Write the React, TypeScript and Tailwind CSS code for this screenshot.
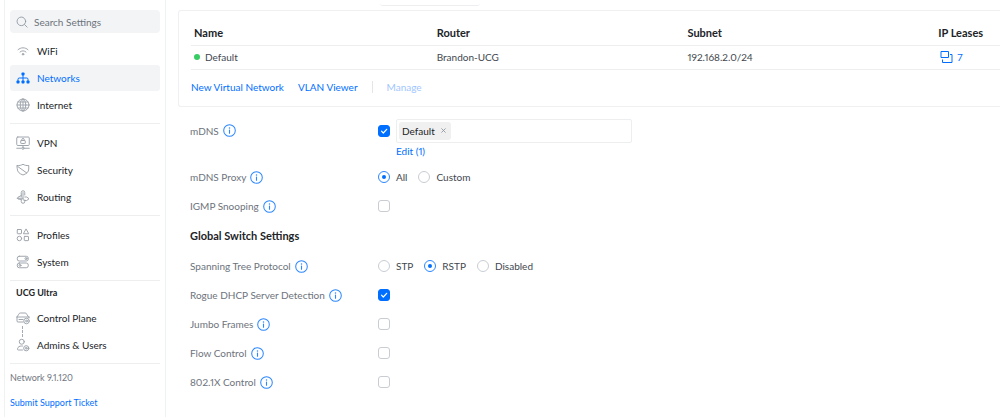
import type { ReactNode } from "react";

function Icon({ children, className = "size-[14px]" }: { children: ReactNode; className?: string }) {
  return (
    <svg
      viewBox="0 0 28 28"
      className={`shrink-0 ${className}`}
      fill="none"
      stroke="currentColor"
      strokeWidth="2"
      strokeLinecap="round"
      strokeLinejoin="round"
      aria-hidden="true"
    >
      {children}
    </svg>
  );
}

const icons = {
  search: (
    <>
      <circle cx="12.5" cy="12.5" r="10" />
      <path d="M20 20l6 6" />
    </>
  ),
  wifi: (
    <>
      <path d="M4 11.5c5.5-5.3 14.5-5.3 20 0" />
      <path d="M8 16c3.5-3.2 8.5-3.2 12 0" />
      <circle cx="14" cy="20.5" r="1.6" fill="currentColor" />
    </>
  ),
  networks: (
    <>
      <path d="M14 7v13M4 20v-3.5q0-2.5 2.5-2.5h15q2.5 0 2.5 2.5V20" />
      <g fill="currentColor" stroke="none">
        <rect x="11" y="3" width="6" height="6" rx="1.5" />
        <rect x="1" y="19" width="6" height="6" rx="1.5" />
        <rect x="11" y="19" width="6" height="6" rx="1.5" />
        <rect x="21" y="19" width="6" height="6" rx="1.5" />
      </g>
    </>
  ),
  internet: (
    <>
      <circle cx="14" cy="14" r="12" />
      <ellipse cx="14" cy="14" rx="5.5" ry="12" />
      <path d="M14 2v24M2 14h24M4 8h20M4 20h20" />
    </>
  ),
  vpn: (
    <>
      <rect x="1.5" y="2" width="25" height="17" rx="2" />
      <rect x="9.5" y="9" width="9" height="6" rx="1" />
      <path d="M11.5 9V7.5a2.5 2.5 0 0 1 5 0V9M14 19v3M1.5 24.5h9M17.5 24.5h9" />
      <circle cx="14" cy="24.5" r="2.2" />
    </>
  ),
  security: (
    <>
      <path d="M2.5 5c4.5.5 8.500-.5 11.5-2.500C17 4.500 21 5.500 25.500 5v7c0 6-4.500 9.500-11.500 12C7 21.500 2.500 18 2.500 12z" />
      <path d="M3.500 7l18 13" />
    </>
  ),
  routing: (
    <>
      <path d="M10.500 14V5q0-3.500 3.500-3.500T17.500 5v5M14 5v13.500q0 2 2 2h2" />
      <path d="M10.500 11L4 14.500q-2.500 2 0 3.500l6.500 1M2.500 16.500H14M10.500 19v4q0 3.500 3.500 3.500t3.500-3V20.500" />
      <path d="M17.500 14h4l4.500 3.500-4.500 3.500h-4" />
    </>
  ),
  profiles: (
    <>
      <rect x="2.5" y="3" width="8.5" height="8.5" rx="1" />
      <path d="M20.5 2.5l5 9h-10z" />
      <circle cx="6.8" cy="21" r="4.5" />
      <rect x="16.5" y="16.8" width="8.5" height="8.5" rx="1" />
    </>
  ),
  system: (
    <>
      <rect x="2.5" y="2.5" width="22" height="9.5" rx="4" />
      <rect x="2.5" y="16" width="22" height="9.5" rx="4" />
      <circle cx="20" cy="7.2" r="2" />
      <circle cx="8" cy="20.8" r="2" />
    </>
  ),
  control: (
    <>
      <path d="M2 12l3.500-5.500Q6.500 4 8.500 4h10q2 0 3 2.500L25 12M2 12h24M2 12v8q0 2 2 2h10M26 12v2M6 17h8" />
      <circle cx="21" cy="20" r="5.5" />
      <circle cx="21" cy="20" r="1.8" />
    </>
  ),
  admins: (
    <>
      <circle cx="11.5" cy="7.5" r="5" />
      <path d="M13 24H4.500q-2 0-1.500-2.500C4 17.500 7 16 11 16h2" />
      <circle cx="20.5" cy="20.5" r="5.2" />
      <circle cx="20.5" cy="20.5" r="1.8" />
    </>
  ),
};

type IconName = keyof typeof icons;

const navGroups: { label: string; icon: IconName }[][] = [
  [
    { label: "WiFi", icon: "wifi" },
    { label: "Networks", icon: "networks" },
    { label: "Internet", icon: "internet" },
  ],
  [
    { label: "VPN", icon: "vpn" },
    { label: "Security", icon: "security" },
    { label: "Routing", icon: "routing" },
  ],
  [
    { label: "Profiles", icon: "profiles" },
    { label: "System", icon: "system" },
  ],
];

function NavItem({ label, icon, active }: { label: string; icon: IconName; active?: boolean }) {
  return (
    <a
      href="#"
      className={`flex h-[26px] items-center gap-[7px] rounded-[3px] px-[6px] ${
        active ? "bg-[#f2f4f6] text-[#006fff]" : "text-[#212327]"
      }`}
    >
      <span className={active ? "" : "text-[#a0a6ae]"}>
        <Icon>{icons[icon]}</Icon>
      </span>
      {label}
    </a>
  );
}

function Divider() {
  return <hr className="mt-[5px] mb-[6px] border-[#eceef0]" />;
}

function Sidebar() {
  return (
    <aside className="w-[162px] shrink-0 border-x border-[#f0f1f3] px-[5px] pt-[10px]">
      <label className="mb-[5px] flex h-[23px] items-center gap-[6px] rounded-[4px] bg-[#f2f4f6] px-[6px] text-[#8d95a0]">
        <Icon className="size-3">{icons.search}</Icon>
        <input
          type="text"
          aria-label="Search Settings"
          placeholder="Search Settings"
          className="w-full min-w-0 bg-transparent outline-none placeholder:text-[#6d737b]"
        />
      </label>
      <nav>
        {navGroups.map((group) => (
          <div key={group[0].label}>
            <div className="flex flex-col gap-px">
              {group.map((item) => (
                <NavItem key={item.label} {...item} active={item.label === "Networks"} />
              ))}
            </div>
            <Divider />
          </div>
        ))}
        <h2 className="mb-[6px] px-[6px] text-[9px] leading-3 font-bold text-[#212327]">UCG Ultra</h2>
        <div className="relative flex flex-col gap-px">
          <NavItem label="Control Plane" icon="control" />
          <span className="absolute top-[21px] left-[12px] h-[11px] border-l border-dashed border-[#a5abb3]" />
          <NavItem label="Admins & Users" icon="admins" />
        </div>
      </nav>
      <Divider />
      <p className="text-[9px] leading-4 text-[#70767f]">Network 9.1.120</p>
      <a href="#" className="mt-[9px] block text-[9px] leading-4 text-[#006fff]">Submit Support Ticket</a>
    </aside>
  );
}

function NetworksCard() {
  return (
    <section className="rounded-l-[3px] border border-r-0 border-[#eff0f2] pt-[10px] pb-[11px] pl-3">
      <table className="w-full table-fixed text-left">
        <thead>
          <tr className="h-6 border-b border-[#eceef0] text-[11px] text-[#212327]">
            <th className="w-[30%] px-[3px] font-bold">Name</th>
            <th className="w-[31%] px-[3px] font-bold">Router</th>
            <th className="w-[31%] px-[3px] font-bold">Subnet</th>
            <th className="w-[8%] px-[3px] font-bold">IP Leases</th>
          </tr>
        </thead>
        <tbody>
          <tr className="h-6 border-b border-[#eceef0] text-[#42474e]">
            <td className="px-[3px]">
              <span className="flex items-center gap-[5px]">
                <span className="size-[6px] rounded-full bg-[#38cc65]" />
                Default
              </span>
            </td>
            <td className="px-[3px]">Brandon-UCG</td>
            <td className="px-[3px]">192.168.2.0/24</td>
            <td className="px-[3px]">
              <a href="#" className="flex items-center gap-1 pl-px text-[#006fff]">
                <Icon>
                  <path d="M5 3h14v12H5zM23 9h3v16H7v-5" strokeLinecap="square" strokeLinejoin="miter" />
                </Icon>
                7
              </a>
            </td>
          </tr>
        </tbody>
      </table>
      <div className="mt-[9px] flex h-4 items-center gap-[14px] text-[#006fff]">
        <button type="button">New Virtual Network</button>
        <button type="button">VLAN Viewer</button>
        <span className="h-3 border-l border-[#e3e6e9]" />
        <button type="button" disabled className="text-[#9fc6ff]">Manage</button>
      </div>
    </section>
  );
}

function InfoIcon() {
  return (
    <Icon className="size-[13px] text-[#2b87ff]">
      <circle cx="14" cy="14" r="12.5" strokeWidth="2.2" />
      <path d="M14 13v7" strokeWidth="2.4" />
      <circle cx="14" cy="8.5" r="1.6" fill="currentColor" stroke="none" />
    </Icon>
  );
}

function Row({ id, label, children }: { id: string; label: string; children: ReactNode }) {
  return (
    <div className="flex h-[29px] items-center">
      <div className="flex w-[188px] shrink-0 items-center gap-1 text-[#6d737c]">
        <label htmlFor={id}>{label}</label>
        <InfoIcon />
      </div>
      {children}
    </div>
  );
}

function Checkbox({ id, checked }: { id: string; checked?: boolean }) {
  return (
    <span className="relative flex size-3 shrink-0">
      <input
        id={id}
        type="checkbox"
        defaultChecked={checked}
        className="peer size-3 appearance-none rounded-[3px] border border-[#c9cdd3] checked:border-[#006fff] checked:bg-[#006fff]"
      />
      <svg
        viewBox="0 0 12 12"
        className="pointer-events-none absolute inset-0 hidden size-3 peer-checked:block"
        fill="none"
        stroke="white"
        strokeWidth="1.2"
        strokeLinecap="round"
        strokeLinejoin="round"
      >
        <path d="M3.5 6.2l1.8 1.8L8.7 4.3" />
      </svg>
    </span>
  );
}

function RadioGroup({ id, options, value }: { id: string; options: string[]; value: string }) {
  return (
    <div className="flex items-center gap-[11px]">
      {options.map((option, i) => (
        <label key={option} className="flex items-center gap-[6px] text-[#42474e]">
          <span className="relative flex size-3 items-center justify-center">
            <input
              id={i === 0 ? id : undefined}
              type="radio"
              name={id}
              defaultChecked={option === value}
              className="peer size-3 appearance-none rounded-full border border-[#c9cdd3] checked:border-[#2b87ff]"
            />
            <span className="pointer-events-none absolute hidden size-[4px] rounded-full bg-[#006fff] peer-checked:block" />
          </span>
          {option}
        </label>
      ))}
    </div>
  );
}

export default function App() {
  return (
    <div className="flex min-h-screen overflow-x-hidden bg-white pl-1 font-['Lato','Liberation_Sans',sans-serif] text-[10px] leading-4 proportional-nums">
      <Sidebar />
      <main className="min-w-0 flex-1 pl-3">
        <div className="mb-1 ml-[202px] h-[6px] w-[100px] rounded-b-[3px] border-b border-[#eceef0]" />
        <NetworksCard />
        <form className="pt-3 pl-3">
          <div className="mb-1 flex">
            <div className="flex h-6 w-[188px] shrink-0 items-center gap-1 text-[#6d737c]">
              <label htmlFor="mdns">mDNS</label>
              <InfoIcon />
            </div>
            <div className="flex h-6 items-center">
              <Checkbox id="mdns" checked />
            </div>
            <div className="ml-[6px] w-[236px]">
              <div className="flex h-6 items-center rounded-[2px] border border-[#eceef0] px-[2px]">
                <span className="flex h-[18px] items-center gap-1 rounded-[3px] bg-[#f0f0f1] px-[3px] text-[#212327]">
                  Default
                  <button type="button" aria-label="Remove Default" className="px-[2px] text-[#8d939b]">
                    <svg viewBox="0 0 6 6" className="size-[5px]" stroke="currentColor" strokeWidth="1">
                      <path d="M.5.5l5 5M5.5.5l-5 5" />
                    </svg>
                  </button>
                </span>
              </div>
              <button type="button" className="block text-[#006fff]">Edit (1)</button>
            </div>
          </div>
          <Row id="mdns-proxy" label="mDNS Proxy">
            <RadioGroup id="mdns-proxy" options={["All", "Custom"]} value="All" />
          </Row>
          <Row id="igmp" label="IGMP Snooping">
            <Checkbox id="igmp" />
          </Row>
          <h2 className="flex h-[31px] items-center text-[11px] font-bold text-[#212327]">Global Switch Settings</h2>
          <Row id="stp" label="Spanning Tree Protocol">
            <RadioGroup id="stp" options={["STP", "RSTP", "Disabled"]} value="RSTP" />
          </Row>
          <Row id="rogue-dhcp" label="Rogue DHCP Server Detection">
            <Checkbox id="rogue-dhcp" checked />
          </Row>
          <Row id="jumbo" label="Jumbo Frames">
            <Checkbox id="jumbo" />
          </Row>
          <Row id="flow" label="Flow Control">
            <Checkbox id="flow" />
          </Row>
          <Row id="dot1x" label="802.1X Control">
            <Checkbox id="dot1x" />
          </Row>
        </form>
      </main>
    </div>
  );
}
